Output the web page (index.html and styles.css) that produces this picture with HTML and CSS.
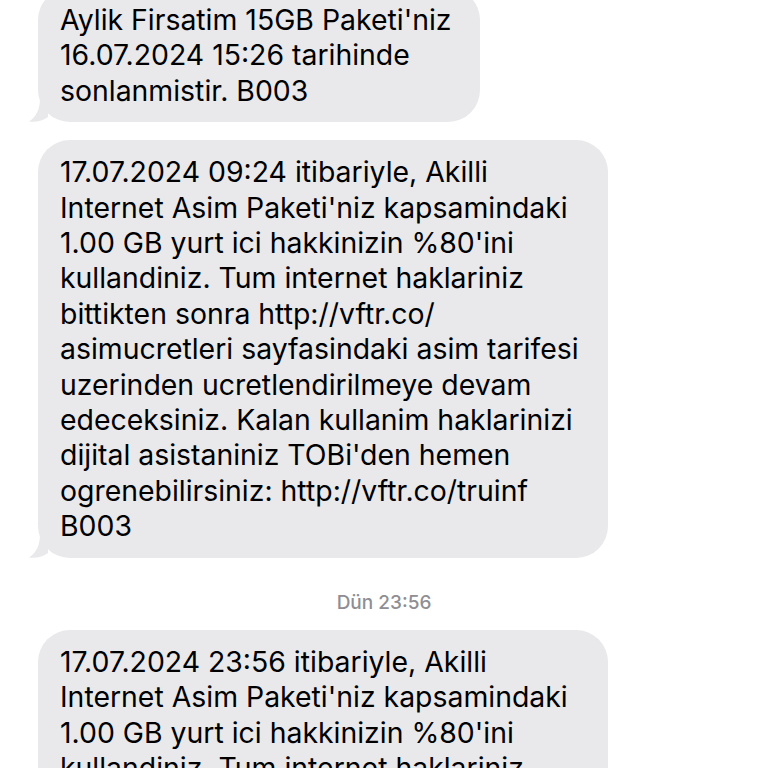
FILE: index.html
```html
<!DOCTYPE html>
<html lang="tr">
<head>
<meta charset="utf-8">
<link rel="stylesheet" href="styles.css">
</head>
<body>
<div class="thread">
  <div class="bubble first">
    <p class="text">Aylik Firsatim 15GB Paketi'niz<br>16.07.2024 15:26 tarihinde<br>sonlanmistir. B003</p>
    <svg class="tail" viewBox="0 0 24 24" width="24" height="24"><path d="M11 0 C11 12 7 19 0 23.5 C7 24.5 14 23 19 19 L19 0 Z"/></svg>
  </div>
  <div class="bubble">
    <p class="text">17.07.2024 09:24 itibariyle, Akilli<br>Internet Asim Paketi'niz kapsamindaki<br>1.00 GB yurt ici hakkinizin %80'ini<br>kullandiniz. Tum internet haklariniz<br>bittikten sonra http://vftr.co/<br>asimucretleri sayfasindaki asim tarifesi<br>uzerinden ucretlendirilmeye devam<br>edeceksiniz. Kalan kullanim haklarinizi<br>dijital asistaniniz TOBi'den hemen<br>ogrenebilirsiniz: http://vftr.co/truinf<br>B003</p>
    <svg class="tail" viewBox="0 0 24 24" width="24" height="24"><path d="M11 0 C11 12 7 19 0 23.5 C7 24.5 14 23 19 19 L19 0 Z"/></svg>
  </div>
  <div class="stamp"><span class="day">Dün</span> 23:56</div>
  <div class="bubble">
    <p class="text">17.07.2024 23:56 itibariyle, Akilli<br>Internet Asim Paketi'niz kapsamindaki<br>1.00 GB yurt ici hakkinizin %80'ini<br>kullandiniz. Tum internet haklariniz<br>bittikten sonra http://vftr.co/<br>asimucretleri sayfasindaki asim tarifesi<br>uzerinden ucretlendirilmeye devam<br>edeceksiniz.</p>
  </div>
</div>
</body>
</html>
```
FILE: styles.css
```css
html, body {
  margin: 0;
  padding: 0;
  background: #ffffff;
  height: 768px;
  overflow: hidden;
}
.thread {
  display: flex;
  flex-direction: column;
  align-items: flex-start;
  padding-left: 38px;
  font-family: "Inter", "Liberation Sans", sans-serif;
}
.bubble {
  position: relative;
  background: #e9e9eb;
  border-radius: 32px;
  padding: 14px 29px 14px 22px;
  margin-bottom: 18px;
}
.bubble.first {
  margin-top: -12px;
}
.text {
  margin: 0;
  font-size: 28.4px;
  line-height: 35.4px;
  color: #000;
  white-space: nowrap;
}
.tail {
  position: absolute;
  left: -9px;
  bottom: 0;
  fill: #e9e9eb;
}
.stamp {
  align-self: stretch;
  margin-left: -38px;
  text-align: center;
  font-size: 19px;
  font-weight: 500;
  color: #8e8e93;
  padding: 16px 0 16px;
  line-height: 22px;
}
```
